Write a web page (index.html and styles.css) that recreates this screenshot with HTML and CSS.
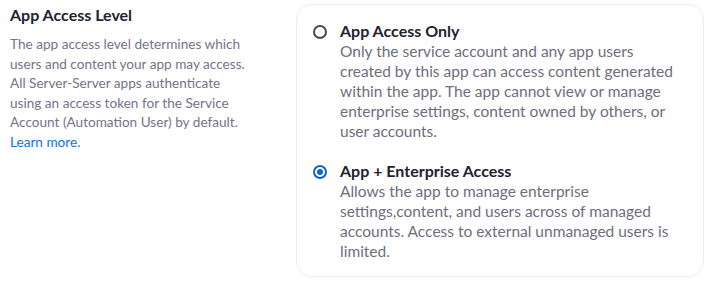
FILE: index.html
```html
<!DOCTYPE html>
<html>
<head>
    <title>App Access Level</title>
    <link rel="stylesheet" href="styles.css">
</head>
<body>
    <div class="section">
        <div class="intro">
            <h2>App Access Level</h2>
            <p>The app access level determines which users and content your app may access. All Server-Server apps authenticate using an access token for the Service Account (Automation User) by default. <a href="#">Learn more.</a></p>
        </div>

        <div class="card">
            <label class="option">
                <input type="radio" name="access" value="app">
                <span class="radio"></span>
                <span class="option-text">
                    <span class="option-title">App Access Only</span>
                    <span class="option-desc">Only the service account and any app users created by this app can access content generated within the app. The app cannot view or manage enterprise settings, content owned by others, or user accounts.</span>
                </span>
            </label>
            <label class="option">
                <input type="radio" name="access" value="enterprise" checked>
                <span class="radio"></span>
                <span class="option-text">
                    <span class="option-title">App + Enterprise Access</span>
                    <span class="option-desc">Allows the app to manage enterprise settings,content, and users across of managed accounts. Access to external unmanaged users is limited.</span>
                </span>
            </label>
        </div>
    </div>
</body>
</html>
```

FILE: styles.css
```css
body {
    font-family: Lato, "Open Sans", sans-serif;
    margin: 0;
    padding: 0;
    background: #fff;
    color: #222230;
}

.section {
    display: flex;
    align-items: flex-start;
    padding: 4px 5px 0 10px;
}

/* left column */
.intro {
    width: 244px;
    flex: none;
}

.intro h2 {
    font-size: 16px;
    font-weight: bold;
    line-height: 20px;
    margin: 1px 0 0 0;
}

.intro p {
    font-size: 13.6px;
    line-height: 19.6px;
    color: #747487;
    margin: 10px 0 0 0;
}

.intro a {
    color: #0e71eb;
    text-decoration: none;
}

/* options card */
.card {
    margin-left: 42px;
    width: 408px;
    box-sizing: border-box;
    border: 1px solid #ececf0;
    border-radius: 16px;
    padding: 16px 20px 15px 16px;
    display: flex;
    flex-direction: column;
    gap: 20px;
}

.option {
    display: flex;
    align-items: flex-start;
    gap: 13px;
    cursor: pointer;
}

.option input {
    display: none;
}

.radio {
    width: 14px;
    height: 14px;
    box-sizing: border-box;
    border: 2px solid #4a4a55;
    border-radius: 50%;
    margin-top: 4px;
    flex: none;
    display: flex;
    align-items: center;
    justify-content: center;
}

.option input:checked + .radio {
    border-color: #0e62e0;
}

.option input:checked + .radio::after {
    content: "";
    width: 6px;
    height: 6px;
    border-radius: 50%;
    background: #0e62e0;
}

.option-text {
    display: flex;
    flex-direction: column;
}

.option-title {
    font-size: 16px;
    font-weight: bold;
    line-height: 20px;
    color: #222230;
}

.option-desc {
    font-size: 15.5px;
    line-height: 20px;
    color: #6e6e7e;
}
```
